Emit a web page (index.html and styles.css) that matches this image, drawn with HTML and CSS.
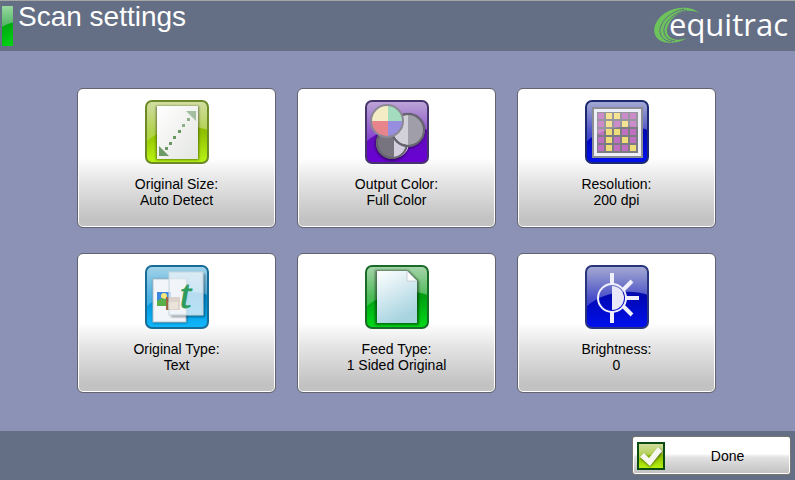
FILE: index.html
```html
<!DOCTYPE html>
<html lang="en">
<head>
    <meta charset="UTF-8">
    <meta name="viewport" content="width=device-width, initial-scale=1.0">
    <title>Scan settings</title>
    <link rel="stylesheet" href="styles.css">
</head>
<body>
    <!-- shared gradients and the gloss used by every icon -->
    <svg class="defs" aria-hidden="true">
        <defs>
            <linearGradient id="gloss-fill" x1="0" y1="0" x2="0" y2="1">
                <stop offset="0" stop-color="#fff" stop-opacity=".6"/>
                <stop offset="1" stop-color="#fff" stop-opacity=".2"/>
            </linearGradient>
            <linearGradient id="lime" x1="0" y1="0" x2="0" y2="1">
                <stop offset="0" stop-color="#8fae18"/>
                <stop offset=".5" stop-color="#8fc000"/>
                <stop offset="1" stop-color="#baf514"/>
            </linearGradient>
            <linearGradient id="purple" x1="0" y1="0" x2="0" y2="1">
                <stop offset="0" stop-color="#5a1f9c"/>
                <stop offset="1" stop-color="#6a00d6"/>
            </linearGradient>
            <linearGradient id="blue" x1="0" y1="0" x2="0" y2="1">
                <stop offset="0" stop-color="#1c2a90"/>
                <stop offset=".5" stop-color="#0008b4"/>
                <stop offset="1" stop-color="#0010ee"/>
            </linearGradient>
            <linearGradient id="sky" x1="0" y1="0" x2="0" y2="1">
                <stop offset="0" stop-color="#1a92c8"/>
                <stop offset=".5" stop-color="#0090d8"/>
                <stop offset="1" stop-color="#10b8fc"/>
            </linearGradient>
            <linearGradient id="green" x1="0" y1="0" x2="0" y2="1">
                <stop offset="0" stop-color="#20962c"/>
                <stop offset=".5" stop-color="#00a010"/>
                <stop offset="1" stop-color="#00dc18"/>
            </linearGradient>
            <linearGradient id="paper" x1="0" y1="0" x2="1" y2="1">
                <stop offset="0" stop-color="#fff"/>
                <stop offset="1" stop-color="#e4e6e2"/>
            </linearGradient>
            <linearGradient id="paper-blue" x1="0" y1="0" x2=".4" y2="1">
                <stop offset="0" stop-color="#fff"/>
                <stop offset="1" stop-color="#a8d4e0"/>
            </linearGradient>
            <path id="gloss" d="M1 6Q1 1 6 1H58Q63 1 63 6V30C42 23 16 28 1 42Z" fill="url(#gloss-fill)"/>
        </defs>
    </svg>

    <header class="header">
        <span class="accent"></span>
        <h1 class="title">Scan settings</h1>
        <div class="logo">
            <svg class="swoosh" viewBox="0 0 46 38" aria-hidden="true">
                <path d="M45 7C38 0 22 0 11 7C1 14-3 25 3 32C8 38 22 39 33 32C25 35 17 34 14 29C11 23 15 14 24 8C31 4 38 4 45 7Z" fill="#6cc35c"/>
                <path d="M30 3C15 6 5 17 6 26C7 32 11 35 18 36M33 4C19 7 9 17 10 26C11 31 14 34 21 35" fill="none" stroke="#646e84" stroke-width="1"/>
            </svg>
            <span class="logo-text">equitrac</span>
        </div>
    </header>

    <main class="settings">
        <button type="button" class="tile">
            <svg class="icon" viewBox="0 0 64 64" aria-hidden="true">
                <rect x="1" y="1" width="62" height="62" rx="6" fill="url(#lime)"/>
                <use href="#gloss"/>
                <rect class="shadow" x="11" y="6" width="43" height="54"/>
                <rect x="12" y="6" width="41" height="53" fill="url(#paper)"/>
                <path d="M14 46V56H24Z" fill="#6e9a68"/>
                <path d="M41 11H51V21Z" fill="#a4bfa0"/>
                <path d="M42 18h3v3h-3zM37 24h3v3h-3z" fill="#8eb088"/>
                <path d="M33 30h3v3h-3zM28 36h3v3h-3zM24 42h3v3h-3zM20 47h3v3h-3z" fill="#6a9864"/>
                <rect x="1" y="1" width="62" height="62" rx="6" fill="none" stroke="#6c8a28" stroke-width="2"/>
            </svg>
            <span class="name">Original Size:</span>
            <span class="value">Auto Detect</span>
        </button>

        <button type="button" class="tile">
            <svg class="icon" viewBox="0 0 64 64" aria-hidden="true">
                <rect x="1" y="1" width="62" height="62" rx="6" fill="url(#purple)"/>
                <use href="#gloss"/>
                <circle class="shadow" cx="27" cy="44" r="17"/>
                <circle class="shadow" cx="43" cy="31" r="17"/>
                <g stroke="#66646e" stroke-width="2">
                    <circle cx="27" cy="43" r="15" fill="#77747f"/>
                    <path d="M29 28A15 15 0 0 1 29 58Z" fill="#d3cfde" stroke="none"/>
                    <circle cx="27" cy="43" r="15" fill="none"/>
                    <circle cx="43" cy="30" r="16" fill="#d2d0d8"/>
                    <path d="M43 14A16 16 0 0 1 43 46Z" fill="#a09ea8" stroke="none"/>
                    <circle cx="43" cy="30" r="16" fill="none"/>
                </g>
                <path d="M23 21V5A16 16 0 0 0 6 21Z" fill="#f4ecc4"/>
                <path d="M23 21V5A16 16 0 0 1 38 21Z" fill="#a4dcc0"/>
                <path d="M23 21H6A16 16 0 0 0 23 37Z" fill="#e8848c"/>
                <path d="M23 21H38A16 16 0 0 1 23 37Z" fill="#988ee0"/>
                <circle cx="22" cy="21" r="16" fill="none" stroke="#8c8894" stroke-width="2"/>
                <rect x="1" y="1" width="62" height="62" rx="6" fill="none" stroke="#46346c" stroke-width="2"/>
            </svg>
            <span class="name">Output Color:</span>
            <span class="value">Full Color</span>
        </button>

        <button type="button" class="tile">
            <svg class="icon" viewBox="0 0 64 64" aria-hidden="true">
                <rect x="1" y="1" width="62" height="62" rx="6" fill="url(#blue)"/>
                <use href="#gloss"/>
                <rect x="8" y="8" width="49" height="49" fill="#eeeef6" stroke="#8c8c94" stroke-width="2"/>
                <rect x="12" y="12" width="41" height="41" fill="#7c7c84"/>
                <path d="M13 13h6v6h-6zM37 13h6v6h-6zM45 13h6v6h-6zM13 21h6v6h-6zM29 21h6v6h-6zM45 21h6v6h-6zM13 29h6v6h-6zM37 29h6v6h-6zM45 29h6v6h-6zM13 37h6v6h-6zM29 37h6v6h-6zM45 37h6v6h-6zM13 45h6v6h-6zM29 45h6v6h-6zM37 45h6v6h-6z" fill="#c070c0"/>
                <path d="M21 13h6v6h-6zM29 13h6v6h-6zM21 21h6v6h-6zM37 21h6v6h-6zM21 29h6v6h-6zM29 29h6v6h-6zM21 37h6v6h-6zM37 37h6v6h-6zM21 45h6v6h-6zM45 45h6v6h-6z" fill="#f0dc78"/>
                <path d="M12 12H53V27C38 25 24 28 12 34Z" fill="#fff" fill-opacity=".2"/>
                <rect x="1" y="1" width="62" height="62" rx="6" fill="none" stroke="#1c2870" stroke-width="2"/>
            </svg>
            <span class="name">Resolution:</span>
            <span class="value">200 dpi</span>
        </button>

        <button type="button" class="tile">
            <svg class="icon" viewBox="0 0 64 64" aria-hidden="true">
                <rect x="1" y="1" width="62" height="62" rx="6" fill="url(#sky)"/>
                <use href="#gloss"/>
                <rect class="shadow" x="8" y="14" width="34" height="44"/>
                <rect x="8" y="14" width="33" height="43" fill="#f2f6fa" stroke="#b4c4d0"/>
                <rect x="12" y="27" width="14" height="14" fill="#3c88e0"/>
                <circle cx="19" cy="31" r="3" fill="#f6e878"/>
                <path d="M12 36L17 33L26 37V41H12Z" fill="#58b048"/>
                <rect x="21" y="32" width="14" height="13" fill="#9c6844"/>
                <path d="M23 37H33V44H23Z" fill="#d8a878"/>
                <path class="shadow" d="M58 9H60V52H26V50H58Z"/>
                <rect x="24" y="7" width="34" height="43" fill="#f0f5f8" fill-opacity=".76" stroke="#c4d6de"/>
                <text class="glyph" x="35" y="43">t</text>
                <rect x="1" y="1" width="62" height="62" rx="6" fill="none" stroke="#186c98" stroke-width="2"/>
            </svg>
            <span class="name">Original Type:</span>
            <span class="value">Text</span>
        </button>

        <button type="button" class="tile">
            <svg class="icon" viewBox="0 0 64 64" aria-hidden="true">
                <rect x="1" y="1" width="62" height="62" rx="6" fill="url(#green)"/>
                <use href="#gloss"/>
                <path class="shadow" d="M10 5H43L54 16V60H10Z"/>
                <path d="M12 6H42L52 16V58H12Z" fill="url(#paper-blue)"/>
                <path d="M42 6V16H52Z" fill="#fff" stroke="#c4d0d4"/>
                <rect x="1" y="1" width="62" height="62" rx="6" fill="none" stroke="#186c28" stroke-width="2"/>
            </svg>
            <span class="name">Feed Type:</span>
            <span class="value">1 Sided Original</span>
        </button>

        <button type="button" class="tile">
            <svg class="icon" viewBox="0 0 64 64" aria-hidden="true">
                <rect x="1" y="1" width="62" height="62" rx="6" fill="url(#blue)"/>
                <use href="#gloss"/>
                <g fill="none" stroke="#f0f0fc">
                    <circle cx="27" cy="33" r="14" stroke-width="2"/>
                    <path d="M27 8V19M27 47V58M41 33H54M38 25L47 16M38 41L47 50" stroke-width="4"/>
                </g>
                <path d="M27 21A12 12 0 0 1 27 45Z" fill="#e8e8f8"/>
                <rect x="1" y="1" width="62" height="62" rx="6" fill="none" stroke="#28347c" stroke-width="2"/>
            </svg>
            <span class="name">Brightness:</span>
            <span class="value">0</span>
        </button>
    </main>

    <footer class="footer">
        <button type="button" class="done">
            <svg class="check" viewBox="0 0 28 28" aria-hidden="true">
                <rect x="1" y="1" width="26" height="26" fill="url(#lime)"/>
                <path d="M1 1H27V12C18 11 8 13 1 18Z" fill="url(#gloss-fill)"/>
                <path class="shadow" d="M3 16L8 12L12 17L22 6L26 10L13 25Z"/>
                <path d="M3 15L7 11L12 16L21 5L25 9L13 24Z" fill="#f6f8f0"/>
                <rect x="1" y="1" width="26" height="26" fill="none" stroke="#0c4c10" stroke-width="2"/>
            </svg>
            <span class="done-text">Done</span>
        </button>
    </footer>
</body>
</html>
```
FILE: styles.css
```css
* {
    box-sizing: border-box;
}
body {
    margin: 0;
    min-height: 100vh;
    display: flex;
    flex-direction: column;
    font-family: "Liberation Sans", Arial, sans-serif;
    background: #8c91b6;
}
.defs {
    position: absolute;
    width: 0;
    height: 0;
}

/* header */
.header {
    display: flex;
    align-items: flex-start;
    height: 51px;
    padding: 0 7px 0 2px;
    border-top: 1px solid #a4a6a6;
    background: #646e84;
}
.accent {
    width: 11px;
    height: 40px;
    margin-top: 5px;
    background: radial-gradient(circle at 20px 56px, #00dc14 16px, #00aa10 40px, transparent 41px), linear-gradient(#98d8a0, #58b868 18px);
}
.title {
    margin: 0 0 0 5px;
    font-size: 28px;
    font-weight: normal;
    line-height: 32px;
    color: #fff;
}
.logo {
    display: flex;
    margin-left: auto;
    padding-top: 5px;
}
.swoosh {
    width: 46px;
    height: 38px;
    margin-right: -31px;
}
.logo-text {
    font-family: "Open Sans", sans-serif;
    font-size: 31px;
    line-height: 36px;
    color: #fff;
}

/* setting tiles */
.settings {
    flex: 1;
    display: grid;
    grid-template-columns: repeat(3, 199px);
    gap: 25px 21px;
    justify-content: center;
    align-content: start;
    padding: 37px 2px 38px 0;
}
.tile {
    display: flex;
    flex-direction: column;
    align-items: center;
    padding: 11px 8px 19px;
    border: 1px solid #62636c;
    border-radius: 6px;
    background: linear-gradient(#fff 50%, #e6e6e6 66%, #c2c2c2 94%);
    box-shadow: inset 0 0 0 1px #fff;
    font-family: inherit;
    font-size: 14px;
    line-height: 16px;
    color: #000;
    cursor: pointer;
}
.icon {
    width: 64px;
    height: 64px;
    margin-bottom: 12px;
}
.shadow {
    fill: #000;
    fill-opacity: .45;
    filter: blur(1px);
}
.glyph {
    font: italic 40px "Liberation Serif", serif;
    fill: #2c9c5c;
    stroke: #2c9c5c;
}

/* footer */
.footer {
    display: flex;
    justify-content: flex-end;
    padding: 5px 4px;
    background: #646e84;
}
.done {
    display: flex;
    align-items: center;
    width: 159px;
    height: 39px;
    padding: 0 0 0 4px;
    border: 1px solid #77756f;
    border-radius: 3px;
    background: linear-gradient(#fff 45%, #e2e2e2 55%, #c0c0c0);
    box-shadow: inset 0 0 0 1px #fff;
    font-family: inherit;
    font-size: 14px;
    color: #000;
    cursor: pointer;
}
.check {
    width: 28px;
    height: 28px;
}
.done-text {
    flex: 1;
    text-align: center;
}
```
